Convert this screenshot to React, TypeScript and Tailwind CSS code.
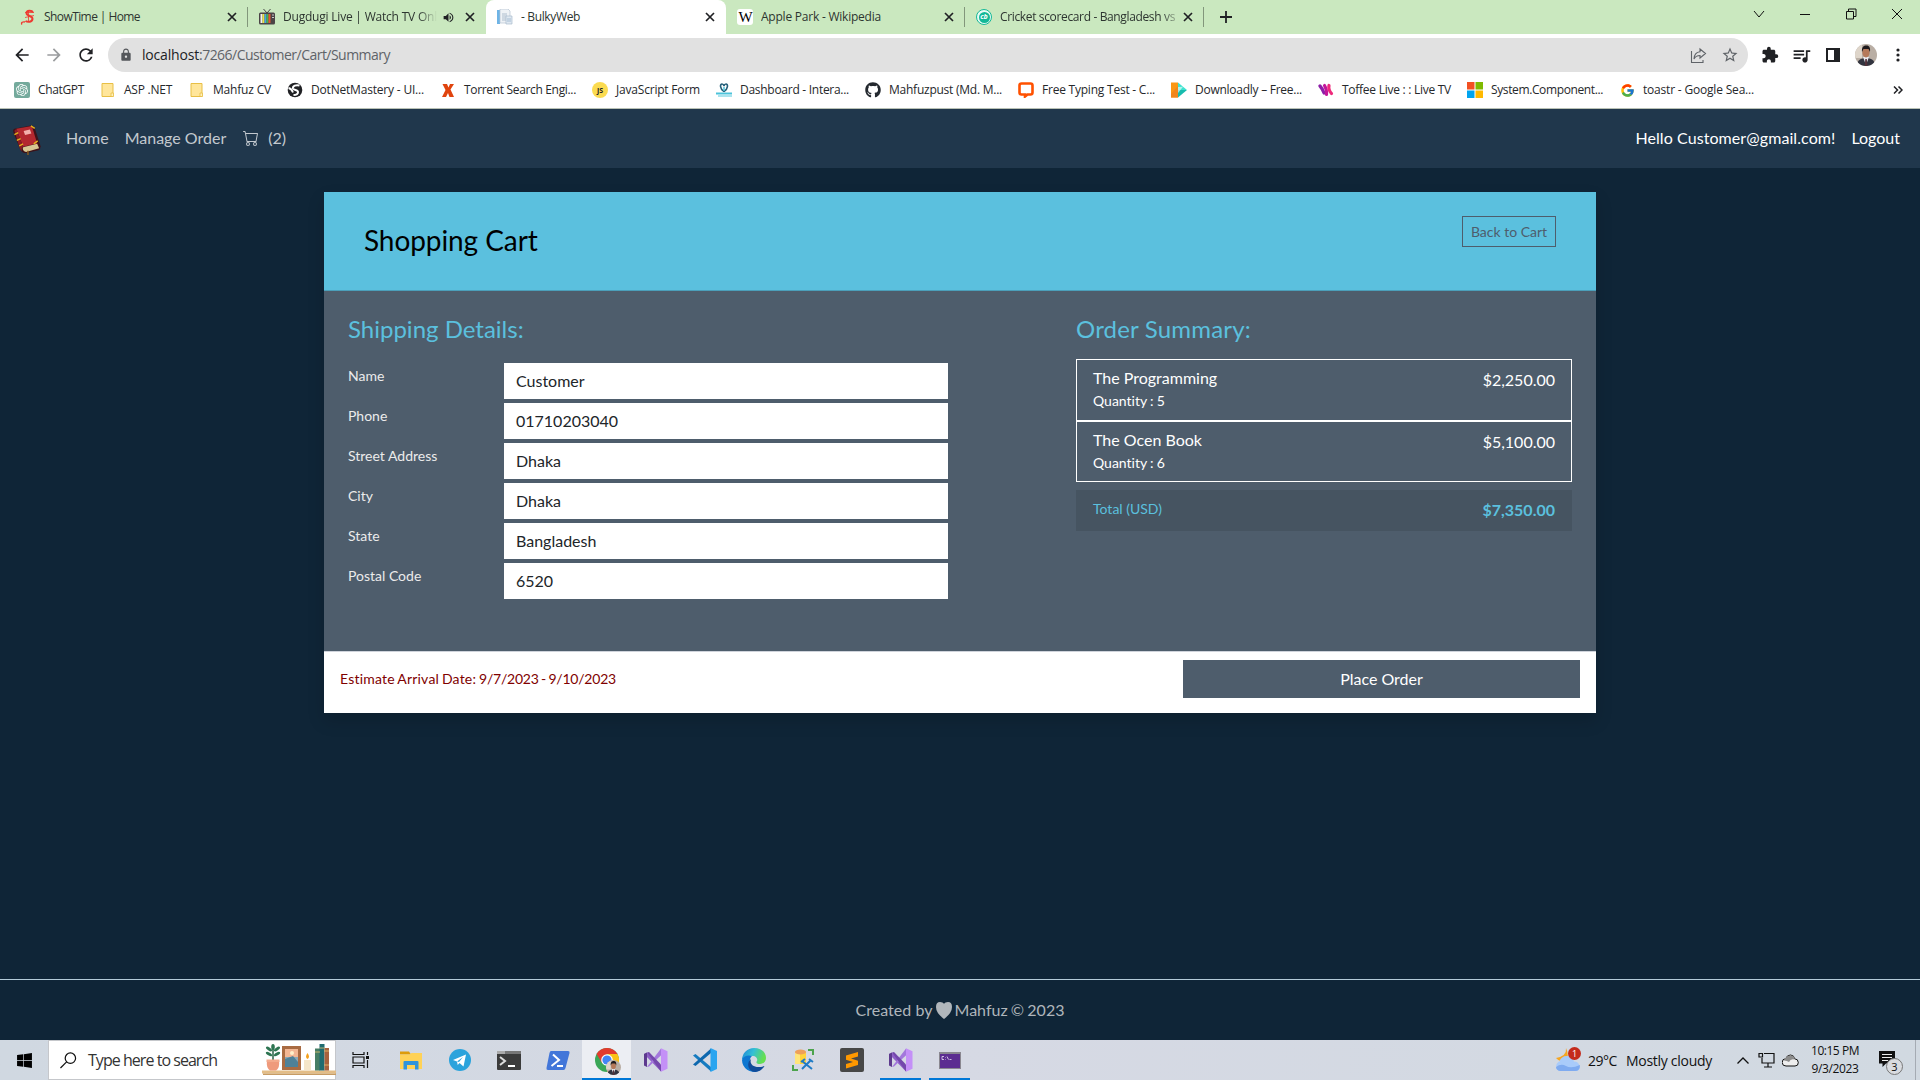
import { useLayoutEffect, useRef, type ReactNode } from "react";
import { FaGithub, FaWindows } from "react-icons/fa";
import { MdExtension, MdLock, MdQueueMusic, MdStarBorder, MdRefresh, MdArrowBack, MdArrowForward, MdVolumeUp } from "react-icons/md";
import { BsCart } from "react-icons/bs";
import { FcGoogle } from "react-icons/fc";
import { SiOpenai } from "react-icons/si";

/* Spreads one line of text over a given width by adjusting its letter spacing. */
function Fit({ w, className = "", children }: { w: number; className?: string; children: string }) {
  const ref = useRef<HTMLSpanElement>(null);
  useLayoutEffect(() => {
    const el = ref.current;
    if (!el) return;
    el.style.letterSpacing = "0px";
    const natural = el.getBoundingClientRect().width;
    el.style.letterSpacing = `${(w - natural) / children.length}px`;
  }, [w, children]);
  return (
    <span ref={ref} className={`inline-block shrink-0 whitespace-pre ${className}`}>
      {children}
    </span>
  );
}

function CloseX() {
  return (
    <svg viewBox="0 0 10 10" className="h-[10px] w-[10px] shrink-0" stroke="#202124" strokeWidth="1.7">
      <path d="M1 1l8 8M9 1l-8 8" />
    </svg>
  );
}

function Tab({ icon, title, w, fade, sound, sep, active, className = "" }: { icon: ReactNode; title: string; w: number; fade?: boolean; sound?: boolean; sep?: boolean; active?: boolean; className?: string }) {
  return (
    <div className={`relative flex h-[34px] shrink-0 items-center pl-[11px] pr-[11px] ${active ? "rounded-t-[8px] bg-white" : ""} ${className}`}>
      <div className="flex h-4 w-4 shrink-0 items-center justify-center">{icon}</div>
      <div className={`ml-2 min-w-0 flex-1 overflow-hidden text-[12px] leading-[16px] text-[#2d3530] ${fade ? "[mask-image:linear-gradient(to_right,black_88%,transparent)]" : ""}`}>
        <Fit w={w}>{title}</Fit>
      </div>
      {sound && <MdVolumeUp className="ml-[5px] mr-[10px] h-[13px] w-[13px] shrink-0 text-[#202124]" />}
      <CloseX />
      {sep && <div className="absolute right-0 top-[7px] h-[20px] w-px bg-[#82967b]" />}
    </div>
  );
}

function Folder() {
  return (
    <svg viewBox="0 0 16 16" className="h-4 w-4">
      <path d="M2 1.500h11v13H2z" fill="#ffe69b" stroke="#e8bf45" />
      <path d="M11 11h2.500v3.500H11z" fill="#fff0bb" stroke="#e8bf45" strokeWidth=".8" />
    </svg>
  );
}

function Portrait({ className }: { className: string }) {
  return (
    <svg viewBox="0 0 22 22" className={className}>
      <clipPath id="face"><circle cx="11" cy="11" r="11" /></clipPath>
      <g clipPath="url(#face)">
        <path d="M0 0h22v22H0z" fill="#b9aea4" />
        <path d="M0 0h7v14H0z" fill="#ded5ca" />
        <path d="M2 22c0-6 4-8 9-8s9 2 9 8z" fill="#32343f" />
        <path d="M8 13h6l-3 8z" fill="#e8e8ee" />
        <path d="M10.300 15h1.500l.6 7h-2.600z" fill="#54323a" />
        <ellipse cx="11" cy="8.500" rx="3.600" ry="5" fill="#b5795a" />
        <path d="M7 8C6.500 3 8.500 1.500 11.500 1.500S15.500 4 15 8l-1.500-3H8.500z" fill="#1e1a1c" />
      </g>
    </svg>
  );
}

const bookmarks: { cls: string; w: number; label: string; icon: ReactNode }[] = [
  { cls: "w-[86px]", w: 46, label: "ChatGPT", icon: <div className="flex h-4 w-4 items-center justify-center rounded-[2px] bg-[#74aa9c]"><SiOpenai className="h-3 w-3 text-white" /></div> },
  { cls: "w-[89px]", w: 48, label: "ASP .NET", icon: <Folder /> },
  { cls: "w-[98px]", w: 58, label: "Mahfuz CV", icon: <Folder /> },
  { cls: "w-[153px]", w: 113, label: "DotNetMastery - UI...", icon: (
    <svg viewBox="0 0 16 16" className="h-4 w-4"><circle cx="8" cy="8" r="7.300" fill="#202124" /><path d="M12.500 3.500C9 2.500 5.500 4 6 6.500c.5 2 5 1 5 3.400 0 1.800-2 3-4.500 3" stroke="#fff" strokeWidth="2" fill="none" /><path d="M1.500 6q3 .5 4.500 4.500" stroke="#fff" strokeWidth="1.800" fill="none" /></svg>
  ) },
  { cls: "w-[152px]", w: 112, label: "Torrent Search Engi...", icon: (
    <svg viewBox="0 0 16 16" className="h-4 w-4"><path d="M2.500 2H7l1.500 3.500L10 2h4l-3.500 5.500L14 15H9.500L8 11l-2 4H2l3.500-7z" fill="#e0440e" /></svg>
  ) },
  { cls: "w-[124px]", w: 84, label: "JavaScript Form", icon: <div className="flex h-4 w-4 items-center justify-center rounded-full bg-[#fbdb50] text-[7px] font-bold leading-none text-[#222]">JS</div> },
  { cls: "w-[149px]", w: 109, label: "Dashboard - Intera...", icon: (
    <svg viewBox="0 0 16 16" className="h-4 w-4"><path d="M8 9.500C3.500 6.500 4 2 6 2q1.500 0 2 2 .5-2 2-2c2 0 2.500 4.500-2 7.500" fill="none" stroke="#27607a" strokeWidth="1.600" /><path d="M8 5v4" stroke="#4cc3da" strokeWidth="1.500" /><path d="M0 11.500h16" stroke="#4cc3da" strokeWidth="2" /><path d="M2 14h14" stroke="#8edbe8" strokeWidth="1.500" /></svg>
  ) },
  { cls: "w-[153px]", w: 113, label: "Mahfuzpust (Md. M...", icon: <FaGithub className="h-4 w-4 text-[#24292f]" /> },
  { cls: "w-[153px]", w: 113, label: "Free Typing Test - C...", icon: (
    <svg viewBox="0 0 16 16" className="h-4 w-4"><path d="M3.500 1.500h9q2 0 2 2v7q0 2-2 2h-3L7 14.500v-2H3.500q-2 0-2-2v-7q0-2 2-2z" fill="none" stroke="#ff5100" strokeWidth="2.600" /></svg>
  ) },
  { cls: "w-[147px]", w: 107, label: "Downloadly – Free...", icon: (
    <svg viewBox="0 0 16 16" className="h-4 w-4"><path d="M0 .5h7v15H0z" fill="#fb9714" /><path d="M7 .5L16 8H7z" fill="#3fe3d0" /><path d="M16 8l-9 7.500V8z" fill="#17bcae" /><path d="M12 4.700L7 11V5z" fill="#fff" opacity=".6" /><path d="M0 12l7-8v11.500H0z" fill="#f1861c" /></svg>
  ) },
  { cls: "w-[149px]", w: 109, label: "Toffee Live : : Live TV", icon: (
    <svg viewBox="0 0 16 16" className="h-4 w-4"><g fill="none" strokeWidth="3.200" strokeLinecap="round"><path d="M2 4q2 2 4 7" stroke="#8d1fa8" /><path d="M6.500 3.500q2.500 4 2 9" stroke="#c4169a" /><path d="M11 3.500q-1 4 2.500 8" stroke="#ee2a7b" /></g></svg>
  ) },
  { cls: "w-[152px]", w: 112, label: "System.Component...", icon: (
    <svg viewBox="0 0 16 16" className="h-4 w-4"><path d="M0 0h7.500v7.500H0z" fill="#f25022" /><path d="M8.500 0H16v7.500H8.500z" fill="#7fba00" /><path d="M0 8.500h7.500V16H0z" fill="#00a4ef" /><path d="M8.500 8.500H16V16H8.500z" fill="#ffb900" /></svg>
  ) },
  { cls: "w-[150px]", w: 111, label: "toastr - Google Sea...", icon: <FcGoogle className="h-[15px] w-[15px]" /> },
];

function BrowserChrome() {
  return (
    <div className="h-[109px] shrink-0 border-b border-[#b9c1b5] bg-white font-['Open_Sans',sans-serif]">
      <div className="flex h-[34px] bg-[#cae8bf]">
        <Tab className="ml-[9px] w-[239px]" w={96} sep title="ShowTime | Home" icon={
          <svg viewBox="0 0 16 16" className="h-4 w-4"><g fill="none" stroke="#ee3a31"><path d="M13 3.500C12 1 6.500 1 6.500 4c0 3.500 6.500 2.500 6 6-.4 3-4.500 3.500-7 2" strokeWidth="2" /><path d="M8.500 1v11.500M5 3.500h9M5 8.500l9-2" strokeWidth=".8" /><path d="M2 15.500c-1.500-2 1-3 3-2.500" strokeWidth="1.300" /></g></svg>
        } />
        <Tab className="w-[238px]" w={154} fade sound title="Dugdugi Live | Watch TV Onl" icon={
          <svg viewBox="0 0 16 16" className="h-4 w-4"><path d="M4.500 0L8 4l3.500-4" stroke="#444" fill="none" /><rect y="3.500" width="16" height="12" rx="1.500" fill="#4b4446" /><path d="M1.500 5h2v9h-2z" fill="#f4f4f4" /><path d="M3.500 5h2v9h-2z" fill="#ece444" /><path d="M5.500 5h2v9h-2z" fill="#47a5e2" /><path d="M7.500 5h2v9h-2z" fill="#47b552" /><path d="M9.500 5h2v9h-2z" fill="#e9572e" /><path d="M13 6h2M13 8.500h2" stroke="#ccc" /></svg>
        } />
        <Tab active className="w-[240px]" w={59} title="- BulkyWeb" icon={
          <svg viewBox="0 0 16 16" className="h-4 w-4"><path d="M0 1h3v14H0z" fill="#6eb4e6" /><path d="M3 0h8l2 2v12H3z" fill="#eef2f6" stroke="#b5c3d1" strokeWidth=".7" /><path d="M5 5h5M5 7h5M5 9h5M5 11h5" stroke="#93a9bd" strokeWidth=".7" /><path d="M9 7h6v8H9z" fill="#dfe8f1" stroke="#a9bccd" strokeWidth=".7" /><path d="M10 10h4M10 12h4" stroke="#8ea9c4" strokeWidth=".7" /></svg>
        } />
        <Tab className="w-[239px]" w={120} sep title="Apple Park - Wikipedia" icon={
          <div className="h-4 w-4 rounded-[3px] bg-white text-center font-['Liberation_Serif',serif] text-[15px] leading-[16px] tracking-[-1px] text-black">W</div>
        } />
        <Tab className="w-[239px]" w={175} fade sep title="Cricket scorecard - Bangladesh vs" icon={
          <div className="flex h-4 w-4 items-center justify-center rounded-full border-[1.500px] border-[#14b897] bg-[#e9fbf5]"><div className="h-[11px] w-[11px] rounded-full bg-[#14b897] text-center text-[7px] font-bold italic leading-[10px] text-white">cb</div></div>
        } />
        <div className="flex flex-1 items-center pl-[16px]">
          <svg viewBox="0 0 12 12" className="h-3 w-3" stroke="#202124" strokeWidth="1.800"><path d="M6 0v12M0 6h12" /></svg>
        </div>
        <div className="flex h-[28px] w-[184px] items-center">
          {["M1 3l5 6 5-6", "M1 6.500h10", "M1.500 3.500h7v7.500h-7zM3.500 3.500v-2.500h7.500v7.500h-2.500", "M1 1l10 10M11 1L1 11"].map((d) => (
            <div key={d} className="flex w-[46px] justify-center"><svg viewBox="0 0 12 12" className="h-[12px] w-[12px]" fill="none" stroke="#111"><path d={d} /></svg></div>
          ))}
        </div>
      </div>

      <div className="flex h-[42px] items-center">
        <div className="flex w-[108px] items-center pl-[12px] text-[20px] text-[#202124]">
          <MdArrowBack />
          <MdArrowForward className="ml-3 text-[#9a9c9e]" />
          <MdRefresh className="ml-3" />
        </div>
        <div className="flex h-[34px] w-[1640px] items-center rounded-full bg-[#e1e1e1] pl-[11px] pr-[9px]">
          <MdLock className="h-[14px] w-[14px] text-[#54575b]" />
          <div className="ml-[9px] flex flex-1 text-[14px] leading-[20px]">
            <Fit w={57} className="text-[#202124]">localhost</Fit>
            <Fit w={191} className="text-[#5f6368]">:7266/Customer/Cart/Summary</Fit>
          </div>
          <svg viewBox="0 0 18 18" className="mr-[14px] h-[18px] w-[18px]" fill="none" stroke="#5f6368" strokeWidth="1.100"><path d="M2.500 5v11.500h11.500V14" /><path d="M11 3l5.500 4.500-5.500 4.500V9.500C8 9.500 6 11 5 13c.2-4 2.500-7 6-7.300z" /></svg>
          <MdStarBorder className="h-[18px] w-[18px] text-[#5f6368]" />
        </div>
        <div className="flex flex-1 items-center pl-[13px] text-[#202124]">
          <MdExtension className="h-[18px] w-[18px]" />
          <MdQueueMusic className="ml-[12px] h-[21px] w-[21px]" />
          <svg viewBox="0 0 14 14" className="ml-[14px] h-[14px] w-[14px]"><path d="M0 0h14v14H0z" fill="#202124" /><path d="M2 2h6v10H2z" fill="#fff" /></svg>
          <Portrait className="ml-[15px] h-[22px] w-[22px]" />
          <svg viewBox="0 0 4 14" className="ml-[19px] h-[14px] w-[4px]" fill="#202124"><circle cx="2" cy="2" r="1.600" /><circle cx="2" cy="7" r="1.600" /><circle cx="2" cy="12" r="1.600" /></svg>
        </div>
      </div>

      <div className="flex h-[28px] items-center pl-[14px] text-[12px] leading-[16px] text-[#26282b]">
        {bookmarks.map((b) => (
          <div key={b.label} className={`flex shrink-0 items-center ${b.cls}`}>
            <div className="mr-2 flex h-4 w-4 shrink-0 items-center justify-center">{b.icon}</div>
            <Fit w={b.w}>{b.label}</Fit>
          </div>
        ))}
        <svg viewBox="0 0 10 8" className="ml-auto mr-[17px] h-[8px] w-[10px]" fill="none" stroke="#202124" strokeWidth="1.500"><path d="M1 .5L4.500 4 1 7.500M5.500 .5L9 4 5.500 7.500" /></svg>
      </div>
    </div>
  );
}

function SiteNav() {
  return (
    <nav className="flex h-[59px] shrink-0 items-center bg-[#20374c] pb-[2px] pl-[12px] pr-[20px] text-[16px] leading-6">
      <svg viewBox="0 0 30 32" className="mt-[3px] h-[31px] w-[30px]">
        <path d="M2 5L19 1.500q3 0 4 2.500L29 23q0 3-2 4l-13 3q-4 0-6-4L1 9Q0 6 2 5z" fill="#3d1218" />
        <path d="M4 5L20 2l5.500 18-14.500 3.500z" fill="#b3282f" />
        <path d="M2 7L4 5l7 18.500Q9 25 9.500 28 8.500 27 7.500 25z" fill="#8b1c24" />
        <path d="M11 24l14.500-3.500 2 4.500-13.500 3.800q-4.500-1.300-3-4.800z" fill="#d8c793" />
        <path d="M11.500 7.200l6.500-1.400 1.500 4-6.500 1.500z" fill="#f3b0ac" />
        <path d="M2 11l4-2M4.500 17l4-2M7 22.500l4-2M19 2l4 2.500M22 20.500l4-3" stroke="#e3b21e" strokeWidth="1.500" />
        <path d="M16 27.500v4.500" stroke="#8d5a1a" strokeWidth="1.500" />
      </svg>
      <div className="ml-6 flex items-center text-[#c3c9cf]">
        <span>Home</span>
        <span className="ml-4">Manage Order</span>
        <BsCart className="ml-[17px] h-4 w-4" />
        <span className="ml-[9px]">(2)</span>
      </div>
      <div className="ml-auto flex gap-4 text-white">
        <Fit w={200}>Hello Customer@gmail.com!</Fit>
        <span>Logout</span>
      </div>
    </nav>
  );
}

const fields = [
  ["Name", "Customer"],
  ["Phone", "01710203040"],
  ["Street Address", "Dhaka"],
  ["City", "Dhaka"],
  ["State", "Bangladesh"],
  ["Postal Code", "6520"],
];

const items = [
  { name: "The Programming", qty: 5, price: "$2,250.00", cls: "h-[62px]" },
  { name: "The Ocen Book", qty: 6, price: "$5,100.00", cls: "h-[61px]" },
];

function SummaryCard() {
  return (
    <div className="mx-auto mt-6 w-[1272px] shadow-[0_8px_16px_rgba(0,0,0,0.15)]">
      <div className="flex h-[99px] items-start justify-between border-b border-[#4b9fba] bg-[#5bc0de] px-10 pt-6">
        <h1 className="mt-[7px] text-[28px] leading-[34px] tracking-[-0.08px] text-black">Shopping Cart</h1>
        <button className="h-[31px] w-[94px] border border-[#4e5d6c] text-[14px] leading-[21px] text-[#4e5d6c]">Back to Cart</button>
      </div>
      <div className="flex h-[360px] justify-between bg-[#4e5d6c] px-6 pt-[23px]">
        <section className="w-[600px]">
          <h2 className="text-[24px] leading-[29px] text-[#5bc0de]">Shipping Details:</h2>
          <div className="mt-[20px] flex flex-col gap-1">
            {fields.map(([label, value]) => (
              <div key={label} className="flex h-9">
                <label className="w-[156px] pt-[2px] text-[14px] leading-[21px] text-[#ebebeb]">{label}</label>
                <div className="w-[444px] bg-white pl-3 text-[16px] leading-[35px] text-[#212529]">{value}</div>
              </div>
            ))}
          </div>
        </section>
        <section className="w-[496px]">
          <h2 className="text-[24px] leading-[29px] tracking-[0.18px] text-[#5bc0de]">Order Summary:</h2>
          <div className="mt-[16px] text-white">
            {items.map((it) => (
              <div key={it.name} className={`flex justify-between border border-white px-4 ${it.cls}`}>
                <div>
                  <div className="mt-[8px] text-[16px] leading-[19px]">{it.name}</div>
                  <div className="mt-[3px] text-[14px] leading-[21px] [word-spacing:-0.4px]">Quantity : {it.qty}</div>
                </div>
                <div className="mt-[8px] text-[16px] leading-6">{it.price}</div>
              </div>
            ))}
          </div>
          <div className="mt-2 flex h-[41px] justify-between bg-[#465461] px-[17px] text-[#5bc0de]">
            <span className="pt-[8px] text-[14px] leading-[21px]">Total (USD)</span>
            <span className="pt-[8px] text-[16px] font-bold leading-6">$7,350.00</span>
          </div>
        </section>
      </div>
      <div className="flex h-[62px] justify-between border-t border-[#cfd3db] bg-white px-4 pt-2">
        <div className="flex pt-[8px] text-[14px] leading-[21px] text-[#800000]">
          <Fit w={139} className="[word-spacing:-1px]">Estimate Arrival Date: </Fit>
          <Fit w={137} className="[word-spacing:-1px]">9/7/2023 - 9/10/2023</Fit>
        </div>
        <button className="h-[38px] w-[397px] bg-[#4e5d6c] text-[16px] text-white">Place Order</button>
      </div>
    </div>
  );
}

function VisualStudio() {
  return (
    <svg viewBox="0 0 24 24" className="h-6 w-6">
      <path d="M0 6l3-1.500L19 20l-2 3.500z" fill="#8e5fc7" />
      <path d="M0 6l3-1.500V19L0 17.500z" fill="#5d3a8e" />
      <path d="M3 19L17 .5l2 5-14 13z" fill="#a377dc" />
      <path d="M3 4.500l14 19v-7L5 4z" fill="#7448ac" />
      <path d="M17 .3l6.500 3v17.400l-6.500 3z" fill="#c490f7" />
    </svg>
  );
}

function Task({ children, state = "" }: { children: ReactNode; state?: "" | "open" | "active" }) {
  return (
    <div className={`relative flex h-[40px] w-[49px] shrink-0 items-center justify-center ${state === "active" ? "bg-[#eceef3]" : ""}`}>
      {children}
      {state === "active" && <div className="absolute inset-x-0 bottom-0 h-[2px] bg-[#0078d7]" />}
      {state === "open" && <div className="absolute inset-x-[4px] bottom-0 h-[2px] bg-[#0078d7]" />}
    </div>
  );
}

function Taskbar() {
  return (
    <div className="flex h-[40px] shrink-0 items-center bg-gradient-to-r from-[#d0d8e1] via-[#d6d9e4] to-[#d1d9e1] font-['Open_Sans',sans-serif] text-[#111]">
      <div className="flex w-[48px] justify-center"><FaWindows className="h-[17px] w-[17px] text-black" /></div>
      <div className="flex h-[40px] w-[288px] items-center border border-[#c5c7cb] bg-white pl-[11px]">
        <svg viewBox="0 0 18 18" className="h-[17px] w-[17px]" fill="none" stroke="#111" strokeWidth="1.300"><circle cx="11" cy="6.500" r="5.500" /><path d="M7 10.500L.5 17" /></svg>
        <Fit w={129} className="ml-[11px] text-[16px] leading-5 text-[#333]">Type here to search</Fit>
        <svg viewBox="0 0 74 34" className="-mr-px ml-auto h-[34px] w-[74px]">
          <path d="M0 27.500h74v3H0z" fill="#e3bd87" /><path d="M1 30.500h73v1.500H1z" fill="#c79b62" />
          <path d="M11 18V3" stroke="#286246" strokeWidth="1.500" />
          <g fill="#2e7552"><ellipse cx="11" cy="4" rx="1.800" ry="3" /><ellipse cx="7" cy="6" rx="3.500" ry="1.500" transform="rotate(35 7 6)" /><ellipse cx="15" cy="6" rx="3.500" ry="1.500" transform="rotate(-35 15 6)" /><ellipse cx="7" cy="11" rx="3.500" ry="1.500" transform="rotate(30 7 11)" /><ellipse cx="15" cy="11" rx="3.500" ry="1.500" transform="rotate(-30 15 11)" /></g>
          <path d="M5 17h12q1 8-3 10.500H8Q4 25 5 17z" fill="#ef9a7c" /><path d="M4.500 16.500h13V19h-13z" fill="#f3aa8c" />
          <path d="M20 3h19v24H20z" fill="#a96b42" /><path d="M23 6h13v18H23z" fill="#8ba7b7" /><path d="M23 6h13v8H23z" fill="#f3b794" /><path d="M23 16l8-3 5 6v5H23z" fill="#4e8198" /><circle cx="30" cy="10" r="2" fill="#fff0ca" />
          <path d="M42 17h7v10.500h-7z" fill="#f5e6c9" /><path d="M45.500 10q3 4 0 6-3-2 0-6z" fill="#f5a11c" />
          <path d="M53 5.500h5v22h-5z" fill="#477e64" /><path d="M57.500 1h5v26.500h-5z" fill="#1f6b70" /><path d="M62.500 5h4.500v22.500h-4.500z" fill="#a8613c" /><path d="M57.500 5h5M53 9h5M62 8h5M62 22h5" stroke="#e8c370" strokeWidth=".8" />
        </svg>
      </div>
      <div className="flex w-[50px] justify-center">
        <svg viewBox="0 0 18 16" className="mr-px h-4 w-[18px]" fill="none" stroke="#111" strokeWidth="1.200"><path d="M1 0v2.500h11V0M1 16v-2.500h11V16M1 5h11v6H1zM15.500 0v3M15.500 8v8" /><path d="M14 4h3v3h-3z" fill="#111" stroke="none" /></svg>
      </div>
      <Task><svg viewBox="0 0 22 19" className="h-[19px] w-[22px]"><path d="M0 .5h9l2 3H0z" fill="#dd9c0b" /><path d="M0 3.500h9.500L11.500 2H22v16H0z" fill="#ffd257" /><path d="M3.500 18.500V11q0-1 1-1h13q1 0 1 1v7.500H15V14H7v4.500z" fill="#2f94dc" /></svg></Task>
      <Task><svg viewBox="0 0 22 22" className="h-[22px] w-[22px]"><circle cx="11" cy="11" r="11" fill="#2ba3dc" /><path d="M4 11l13-5.500-2.500 12L10.500 14l-1.800 2-.7-3.500z" fill="#fff" /><path d="M8 12.500L14 8l-4 5z" fill="#2ba3dc" /></svg></Task>
      <Task><svg viewBox="0 0 24 19" className="h-[19px] w-6"><rect width="24" height="19" rx="1" fill="#3b3b3b" /><path d="M0 0h8v3H0z" fill="#aaa" /><path d="M8 0h16v3H8z" fill="#777" /><path d="M3 6l5 4-5 4" fill="none" stroke="#ddd" strokeWidth="2" /><path d="M11 15h7" stroke="#fff" strokeWidth="2" /></svg></Task>
      <Task><svg viewBox="0 0 24 19" className="h-[19px] w-6"><path d="M5 0h17q2 0 1.500 2l-4 15q-.5 2-2 2H2q-2 0-1.500-2l3-15Q4 0 5 0z" fill="#4276d9" /><path d="M7 3.500l6 5.500-7.500 6M11 15h6" fill="none" stroke="#fff" strokeWidth="2" /></svg></Task>
      <Task state="active">
        <svg viewBox="0 0 24 24" className="h-6 w-6"><circle cx="12" cy="12" r="12" fill="#3aa757" /><path d="M1.600 6A12 12 0 0122.400 6H12l-5 9z" fill="#e33b2e" /><path d="M12 6h10.400A12 12 0 0112 24l5-9z" fill="#fbc116" /><circle cx="12" cy="12" r="5.800" fill="#fff" /><circle cx="12" cy="12" r="4.600" fill="#4285f4" /></svg>
        <Portrait className="absolute bottom-[5px] right-[10px] h-[15px] w-[15px]" />
      </Task>
      <Task><VisualStudio /></Task>
      <Task><svg viewBox="0 0 24 24" className="h-6 w-6"><path d="M0 7.500L2.500 6 18 19v4.500z" fill="#167bc0" /><path d="M0 16.500L2.500 18 18 5V.5z" fill="#0d67ae" /><path d="M17.500 0L24 3v18l-6.500 3z" fill="#2aa5f0" /></svg></Task>
      <Task><svg viewBox="0 0 24 24" className="h-6 w-6"><defs><linearGradient id="edge" x2="1" y2=".3"><stop stopColor="#1d84d6" /><stop offset=".5" stopColor="#33bfd6" /><stop offset="1" stopColor="#65df50" /></linearGradient></defs><path d="M0 12A12 12 0 0112 0c8 0 12 5 12 10 0 4-3 6-6 6-4 0-4-2-3-3 1-2-1-5-4-5C5 8 1 10 0 12z" fill="url(#edge)" /><path d="M0 12c1-4 6-5.500 10-4-4 3-3 13 6 15.200A12 12 0 010 12z" fill="#0d77d1" /><path d="M9 11c-2 6 4 10 13.500 7-3 5-8 7-12 5.500C5 21 5 14 9 11z" fill="#104b99" /></svg></Task>
      <Task><svg viewBox="0 0 22 22" className="h-[22px] w-[22px]"><path d="M16 1h5v5M1 16v5h5" fill="none" stroke="#4ca34c" strokeWidth="2" /><path d="M3 3h11v12H3z" fill="#ffd43c" /><path d="M3 3h5v12H3z" fill="#ffe57a" /><ellipse cx="8.500" cy="3" rx="5.500" ry="2.500" fill="#eda05a" /><path d="M10 20l9-9M10 12l10 8" stroke="#1f7bc6" strokeWidth="2" /><path d="M9 13l4-3M17 10l4 3" stroke="#1f7bc6" strokeWidth="2" /></svg></Task>
      <Task><svg viewBox="0 0 24 24" className="h-6 w-6"><rect width="24" height="24" rx="2" fill="#474747" /><path d="M6 7.500L18 4v4.500l-7 2 7 2.200V17L6 20.500V16l7-2-7-2.200z" fill="#ff9800" /></svg></Task>
      <Task state="open"><VisualStudio /></Task>
      <Task state="open"><svg viewBox="0 0 22 17" className="h-[17px] w-[22px]"><path d="M0 0h22v17H0z" fill="#8a8790" /><path d="M1 2h20v14H1z" fill="#5c2d91" /><path d="M5 4.500H3v3h2M6.500 5v.5M6.500 7v.5M8 4.500l1.500 3M10.500 7.500h2" stroke="#e8dff5" strokeWidth=".8" fill="none" /></svg></Task>

      <div className="ml-auto flex h-full items-center">
        <div className="relative h-[26px] w-[26px]">
          <svg viewBox="0 0 26 26" className="h-[26px] w-[26px]"><path d="M11 1q1 8-10 10 4 5 9 2t1-12z" fill="#f5a623" /><path d="M5 24a5 5 0 01-.5-9.500Q6 9 12 9t7 5.500q5 0 5.500 5T20 24z" fill="#a9cbfa" /><path d="M5 24q-4-1-4-4 5-4 10-1t14-1q0 6-5 6z" fill="#7fabf0" /></svg>
          <div className="absolute right-0 top-0 h-[13px] w-[13px] rounded-full bg-[#c42b1c] text-center text-[9px] leading-[13px] text-white">1</div>
        </div>
        <Fit w={29} className="ml-[7px] text-[14px]">29°C</Fit>
        <Fit w={86} className="ml-[9px] text-[14px]">Mostly cloudy</Fit>
        <svg viewBox="0 0 12 7" className="ml-[25px] h-[7px] w-[12px]" fill="none" stroke="#111" strokeWidth="1.300"><path d="M.5 6.500L6 1l5.500 5.500" /></svg>
        <svg viewBox="0 0 17 16" className="ml-[9px] h-[16px] w-[17px]" fill="none" stroke="#111" strokeWidth="1.200"><path d="M6 1.500h10v9.500H4V6M10 11v4M6 15h8M1 1.500h3.500v3.500H1z" /></svg>
        <svg viewBox="0 0 17 13" className="ml-[7px] h-[13px] w-[17px]"><path d="M4 12a3.600 3.600 0 01-.3-7.300Q5 1 8.500 1t4.200 3.800Q16.200 5 16.300 8.500T13 12z" fill="#eee" stroke="#111" /><path d="M2 6.500Q4 1.500 8.500 1.500T12.500 5.500q-4-1-5.500 2.500-2-1.500-5-1.500z" fill="#8c8c8c" /></svg>
        <div className="ml-[12px] flex w-[48px] flex-col items-center text-[12px] leading-[18px]">
          <Fit w={48}>10:15 PM</Fit>
          <Fit w={47}>9/3/2023</Fit>
        </div>
        <div className="relative ml-[20px] h-[26px] w-[36px]">
          <svg viewBox="0 0 16 16" className="mt-[4px] h-4 w-4"><path d="M0 0h16v12.500H7L3.500 16v-3.500H0z" fill="#111" /><path d="M3 3.500h10M3 6.500h10M3 9.500h6" stroke="#eee" /></svg>
          <div className="absolute left-[7px] top-[11px] h-[17px] w-[17px] rounded-full border border-[#777] bg-[#d9dbdf] text-center text-[11px] leading-[15px]">3</div>
        </div>
        <div className="mr-[4px] h-full w-px bg-[#a5abb3]" />
      </div>
    </div>
  );
}

export default function App() {
  return (
    <div className="flex h-[1080px] w-[1920px] flex-col overflow-hidden bg-[#0f2537] font-['Lato',sans-serif] text-[#ebebeb] [font-variant-ligatures:none]">
      <BrowserChrome />
      <SiteNav />
      <main className="flex-1">
        <SummaryCard />
      </main>
      <footer className="flex h-[61px] shrink-0 items-center justify-center border-t border-[#b4cbd9] text-[16px] leading-6 text-[#b0b6bb]">
        <Fit w={77}>Created by</Fit>
        <svg viewBox="0 0 16 17" className="mx-[3px] h-[17px] w-[16px]" fill="#b0b6bb"><path d="M8 17Q0 11 0 5 0 0 4 0q3 0 4 1.800Q9 0 12 0q4 0 4 5Q16 11 8 17z" /></svg>
        <Fit w={110} className="[word-spacing:-1px]">Mahfuz © 2023</Fit>
      </footer>
      <Taskbar />
    </div>
  );
}
